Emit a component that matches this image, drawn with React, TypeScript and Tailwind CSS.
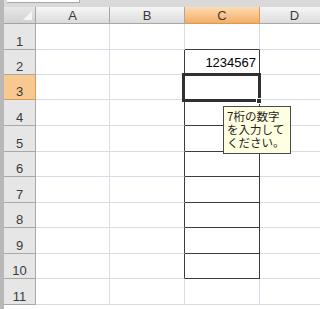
const font = "font-['Liberation_Sans','Noto_Sans_CJK_JP',sans-serif]"

const cols = [
  { name: 'A', w: 'w-[74px]' },
  { name: 'B', w: 'w-[75px]' },
  { name: 'C', w: 'w-[75px]' },
  { name: 'D', w: 'w-[70px]' },
]

const rowHeights = ['h-[26px]', 'h-[25px]', 'h-[25px]', 'h-[26px]', 'h-[26px]', 'h-[25px]', 'h-[26px]', 'h-[25px]', 'h-[26px]', 'h-[25px]', 'h-[26px]']

export default function App() {
  return (
    <div className={`relative w-[320px] h-[309px] overflow-hidden bg-white ${font}`}>
      <div className="flex h-full">
        {/* left frame */}
        <div className="w-[4px] shrink-0 bg-[#b8b8b8]" />
        <div className="flex flex-col min-w-0 flex-1">
          {/* top strip */}
          <div className="h-[7px] shrink-0 bg-[#d9d9d9] flex">
            <div className="ml-[3px] w-[73px] h-[3px] bg-white border-b border-r border-[#a8a8a8]" />
          </div>

          {/* column headers */}
          <div className="flex h-[17px] shrink-0">
            <div className="w-[32px] shrink-0 relative bg-gradient-to-b from-[#e6e6e6] to-[#d2d2d2] border-r border-b border-[#a3a3a3]">
              <div className="absolute right-[3px] bottom-[3px] w-0 h-0 border-l-[9px] border-l-transparent border-b-[9px] border-b-[#f6f6f6]" />
            </div>
            {cols.map(c => (
              <div
                key={c.name}
                className={
                  c.name === 'C'
                    ? `${c.w} shrink-0 flex items-center justify-center text-[13px] leading-none text-[#3a3a3a] bg-gradient-to-b from-[#fcdcb2] to-[#f4ad66] border-r border-b border-[#d99a5a]`
                    : `${c.w} shrink-0 flex items-center justify-center text-[13px] leading-none text-[#3a3a3a] bg-gradient-to-b from-[#f6f6f6] to-[#dcdcdc] border-r border-b border-[#a8a8a8]`
                }
              >
                {c.name}
              </div>
            ))}
          </div>

          {/* rows */}
          {rowHeights.map((h, i) => {
            const r = i + 1
            const boxed = r >= 2 && r <= 10
            return (
              <div key={r} className={`flex ${h} shrink-0`}>
                <div
                  className={
                    r === 3
                      ? 'w-[32px] shrink-0 flex items-end justify-center text-[13px] leading-[15px] text-[#3a3a3a] bg-[#f8c891] border-r border-b border-[#d99a5a]'
                      : 'w-[32px] shrink-0 flex items-end justify-center text-[13px] leading-[15px] text-[#3a3a3a] bg-[#e6e6e6] border-r border-b border-[#a8a8a8]'
                  }
                >
                  {r}
                </div>
                <div className="w-[74px] shrink-0 border-r border-b border-[#d6dce8]" />
                <div className={boxed ? 'w-[75px] shrink-0 border-r border-b border-[#d6dce8] border-r-[#3c3c3c]' : 'w-[75px] shrink-0 border-r border-b border-[#d6dce8]'} />
                {boxed ? (
                  <div className="w-[75px] shrink-0 border-r border-b border-[#3c3c3c] flex items-end justify-end pr-[3px] pb-[4px] text-[13px] leading-[15px] text-black">
                    {r === 2 ? '1234567' : ''}
                  </div>
                ) : (
                  <div className={r === 1 ? 'w-[75px] shrink-0 border-r border-b border-[#d6dce8] border-b-[#3c3c3c]' : 'w-[75px] shrink-0 border-r border-b border-[#d6dce8]'} />
                )}
                <div className="w-[70px] shrink-0 border-r border-b border-[#d6dce8]" />
              </div>
            )
          })}
        </div>
      </div>

      {/* active cell C3 */}
      <div className="absolute left-[182px] top-[73px] w-[79px] h-[29px] border-[3px] border-[#303030]" />
      <div className="absolute left-[256px] top-[98px] w-[6px] h-[6px] bg-[#303030] border border-white" />

      {/* input message tooltip */}
      <div className="absolute left-[223px] top-[106px] w-[68px] h-[48px] bg-[#ffffe1] border border-[#4a4a4a] pl-[3px] pt-[3px] text-[11.5px] leading-[13px] text-[#222] font-['Noto_Sans_CJK_JP',sans-serif]">
        <div>7桁の数字</div>
        <div>を入力して</div>
        <div>ください。</div>
      </div>
    </div>
  )
}
